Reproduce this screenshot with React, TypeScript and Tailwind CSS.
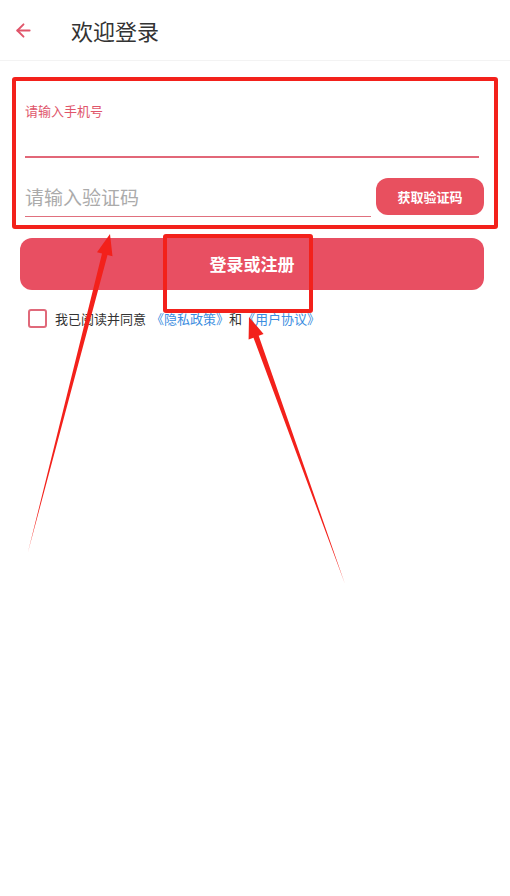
import { ArrowLeft } from 'lucide-react'

const font = { fontFamily: '"Noto Sans CJK SC", "Noto Sans", sans-serif' }

type Pt = [number, number]

// tapered annotation arrow: thin tail, wide shaft near the head, triangle head
function arrowPoints(tail: Pt, tip: Pt) {
  const dx = tip[0] - tail[0]
  const dy = tip[1] - tail[1]
  const len = Math.hypot(dx, dy)
  const d: Pt = [dx / len, dy / len]
  const n: Pt = [-d[1], d[0]]
  const headLen = 21
  const base: Pt = [tip[0] - d[0] * headLen, tip[1] - d[1] * headLen]
  const p = (c: Pt, w: number): Pt => [c[0] + n[0] * w, c[1] + n[1] * w]
  const pts: Pt[] = [tail, p(base, 2.8), p(base, 8), tip, p(base, -8), p(base, -2.8)]
  return pts.map(q => `${q[0].toFixed(1)},${q[1].toFixed(1)}`).join(' ')
}

function Annotations() {
  return (
    <div className="pointer-events-none absolute inset-0">
      <div className="absolute left-[12px] top-[77px] h-[152px] w-[486px] rounded-[3px] border-[4px] border-[#f3211b]" />
      <div className="absolute left-[163px] top-[234px] h-[79px] w-[150px] rounded-[3px] border-[4px] border-[#f3211b]" />
      <svg className="absolute inset-0" width="510" height="896" viewBox="0 0 510 896">
        <polygon points={arrowPoints([28, 552], [110, 234])} fill="#f3211b" />
        <polygon points={arrowPoints([345, 584], [249, 317])} fill="#f3211b" />
      </svg>
    </div>
  )
}

export default function App() {
  return (
    <div className="relative h-[896px] w-full bg-white" style={font}>
      <div className="flex h-[61px] items-center border-b border-[#f3f3f3]">
        <ArrowLeft className="ml-[13px] h-[21px] w-[21px] text-[#e0556a]" strokeWidth={2.2} />
        <span className="ml-[37px] text-[22px] text-[#333333]">欢迎登录</span>
      </div>

      <div className="pl-[25px] pr-[26px] pt-[42px]">
        <div className="text-[13px] leading-[16px] text-[#e0566b]">请输入手机号</div>
        <div className="mr-[5px] h-[39px] border-b-2 border-[#e26778]" />

        <div className="mt-[20px] flex items-end gap-[5px]">
          <div className="flex h-[39px] flex-1 items-center border-b border-[#e0707e] text-[19px] text-[#ababab]">
            请输入验证码
          </div>
          <button className="mb-[2px] h-[37px] w-[108px] rounded-[12px] bg-[#e8505f] text-[13px] font-bold text-white">
            获取验证码
          </button>
        </div>
      </div>

      <button className="mx-[20px] mt-[21px] flex h-[52px] w-[464px] items-center justify-center rounded-[12px] bg-[#e84f62] text-[17px] font-bold text-white">
        登录或注册
      </button>

      <div className="ml-[28px] mt-[19px] flex items-center text-[13px]">
        <span className="h-[19px] w-[19px] rounded-[3px] border-2 border-[#e0697a]" />
        <span className="ml-[8px] text-[#333333]">我已阅读并同意</span>
        <span className="ml-[5px] text-[#3b8de0]">《隐私政策》</span>
        <span className="text-[#333333]">和</span>
        <span className="text-[#3b8de0]">《用户协议》</span>
      </div>

      <Annotations />
    </div>
  )
}
